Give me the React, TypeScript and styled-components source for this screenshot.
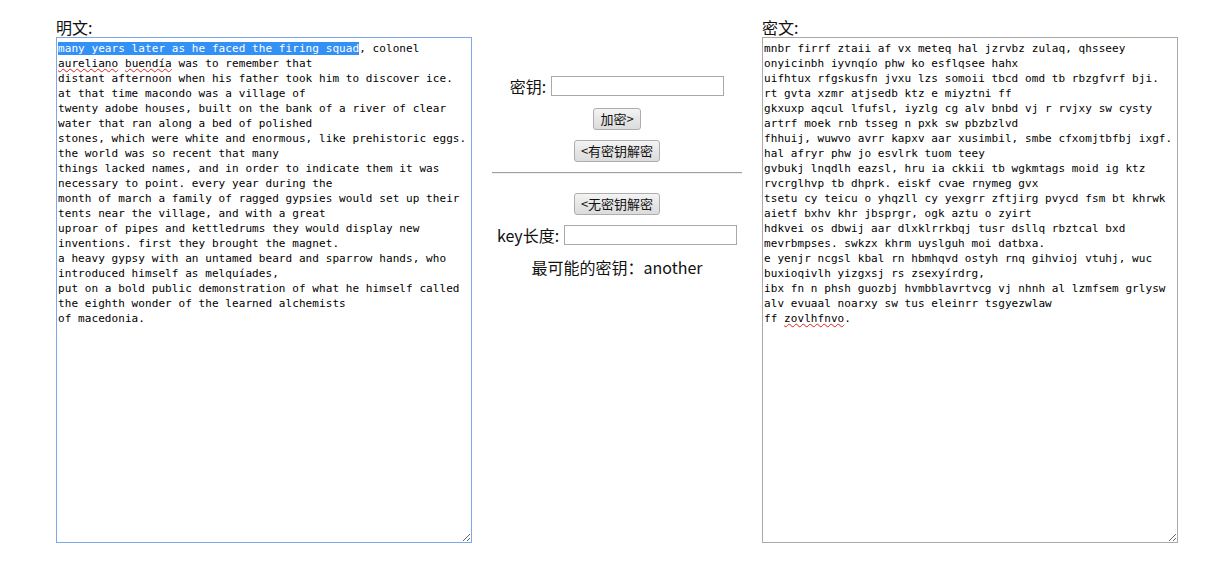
import React from "react";
import styled, { createGlobalStyle } from "styled-components";

const Global = createGlobalStyle`
  html, body { margin: 0; padding: 0; background: #fff; }
  body { font-family: "Noto Sans", "Noto Sans CJK SC", sans-serif; color: #111; }
`;

const Page = styled.div`
  display: flex;
  align-items: flex-start;
  padding: 18px 0 0 56px;
`;

const Panel = styled.div`
  display: flex;
  flex-direction: column;
  width: 416px;
`;

const PanelLabel = styled.label`
  font-family: "Noto Sans CJK SC", "Noto Sans", sans-serif;
  font-size: 16px;
  line-height: 19px;
  height: 19px;
  color: #111;
`;

const TextBox = styled.div<{ $focused?: boolean }>`
  box-sizing: border-box;
  width: 416px;
  height: 506px;
  border: 1px solid ${(p) => (p.$focused ? "#7fa8ec" : "#a9a9a9")};
  padding: 3px 1px 2px;
  overflow: auto;
  resize: both;
  white-space: pre;
  font-family: "DejaVu Sans Mono", "Liberation Mono", monospace;
  font-size: 11px;
  letter-spacing: 0.07px;
  line-height: 15px;
  color: #000;
  background: #fff;
`;

const Selected = styled.span`
  display: inline-block;
  height: 13px;
  line-height: 13px;
  background: #3390f5;
  color: #fff;
`;

const Misspelled = styled.span`
  display: inline-block;
  height: 13px;
  line-height: 13px;
  text-decoration: underline wavy #e02020;
  text-decoration-thickness: 1px;
  text-underline-offset: 1px;
  text-decoration-skip-ink: none;
`;

const Middle = styled.div`
  width: 290px;
  display: flex;
  flex-direction: column;
  align-items: center;
  padding-top: 58px;
`;

const FieldRow = styled.div<{ $mt?: number }>`
  display: flex;
  align-items: center;
  gap: 5px;
  height: 20px;
  margin-top: ${(p) => p.$mt ?? 0}px;
  font-family: "Noto Sans CJK SC", "Noto Sans", sans-serif;
  font-size: 16px;
  color: #111;
`;

const TextInput = styled.input`
  box-sizing: border-box;
  width: 173px;
  height: 20px;
  border: 1px solid #a9a9a9;
  padding: 0 2px;
  margin: 0;
  background: #fff;
  outline: none;
`;

const Button = styled.button<{ $mt?: number }>`
  box-sizing: border-box;
  height: 22px;
  margin-top: ${(p) => p.$mt ?? 0}px;
  padding: 0 6px;
  border: 1px solid #adadad;
  border-radius: 3px;
  background: linear-gradient(#f4f4f4, #e6e6e6 50%, #dcdcdc);
  font-family: "Noto Sans CJK SC", "Noto Sans", sans-serif;
  font-size: 13px;
  line-height: 18px;
  color: #111;
  cursor: pointer;
`;

const Divider = styled.hr`
  box-sizing: border-box;
  width: 250px;
  margin: 10px 0 0 0;
  border: 0;
  border-top: 1px solid #a0a0a0;
  border-bottom: 1px solid #eeeeee;
  height: 2px;
`;

const Result = styled.div`
  margin-top: 12px;
  font-family: "Noto Sans CJK SC", "Noto Sans", sans-serif;
  font-size: 16px;
  line-height: 20px;
  color: #111;
`;

const plainRest = `, colonel
`;

const plainBody = ` was to remember that
distant afternoon when his father took him to discover ice.
at that time macondo was a village of
twenty adobe houses, built on the bank of a river of clear
water that ran along a bed of polished
stones, which were white and enormous, like prehistoric eggs.
the world was so recent that many
things lacked names, and in order to indicate them it was
necessary to point. every year during the
month of march a family of ragged gypsies would set up their
tents near the village, and with a great
uproar of pipes and kettledrums they would display new
inventions. first they brought the magnet.
a heavy gypsy with an untamed beard and sparrow hands, who
introduced himself as melquíades,
put on a bold public demonstration of what he himself called
the eighth wonder of the learned alchemists
of macedonia.`;

const cipherBody = `mnbr firrf ztaii af vx meteq hal jzrvbz zulaq, qhsseey
onyicinbh iyvnqío phw ko esflqsee hahx
uifhtux rfgskusfn jvxu lzs somoii tbcd omd tb rbzgfvrf bji.
rt gvta xzmr atjsedb ktz e miyztni ff
gkxuxp aqcul lfufsl, iyzlg cg alv bnbd vj r rvjxy sw cysty
artrf moek rnb tsseg n pxk sw pbzbzlvd
fhhuij, wuwvo avrr kapxv aar xusimbil, smbe cfxomjtbfbj ixgf.
hal afryr phw jo esvlrk tuom teey
gvbukj lnqdlh eazsl, hru ia ckkii tb wgkmtags moid ig ktz
rvcrglhvp tb dhprk. eiskf cvae rnymeg gvx
tsetu cy teicu o yhqzll cy yexgrr zftjirg pvycd fsm bt khrwk
aietf bxhv khr jbsprgr, ogk aztu o zyirt
hdkvei os dbwij aar dlxklrrkbqj tusr dsllq rbztcal bxd
mevrbmpses. swkzx khrm uyslguh moi datbxa.
e yenjr ncgsl kbal rn hbmhqvd ostyh rnq gihvioj vtuhj, wuc
buxioqivlh yizgxsj rs zsexyírdrg,
ibx fn n phsh guozbj hvmbblavrtvcg vj nhnh al lzmfsem grlysw
alv evuaal noarxy sw tus eleinrr tsgyezwlaw
ff `;

export default function App() {
  return (
    <>
      <Global />
      <Page>
        <Panel>
          <PanelLabel>明文:</PanelLabel>
          <TextBox $focused role="textbox" aria-multiline="true">
            <Selected>many years later as he faced the firing squad</Selected>
            {plainRest}
            <Misspelled>aureliano</Misspelled> <Misspelled>buendía</Misspelled>
            {plainBody}
          </TextBox>
        </Panel>
        <Middle>
          <FieldRow>
            <span>密钥:</span>
            <TextInput type="text" />
          </FieldRow>
          <Button $mt={12}>加密&gt;</Button>
          <Button $mt={10}>&lt;有密钥解密</Button>
          <Divider />
          <Button $mt={19}>&lt;无密钥解密</Button>
          <FieldRow $mt={10}>
            <span>key长度:</span>
            <TextInput type="text" />
          </FieldRow>
          <Result>最可能的密钥：another</Result>
        </Middle>
        <Panel>
          <PanelLabel>密文:</PanelLabel>
          <TextBox role="textbox" aria-multiline="true">
            {cipherBody}
            <Misspelled>zovlhfnvo</Misspelled>.
          </TextBox>
        </Panel>
      </Page>
    </>
  );
}
